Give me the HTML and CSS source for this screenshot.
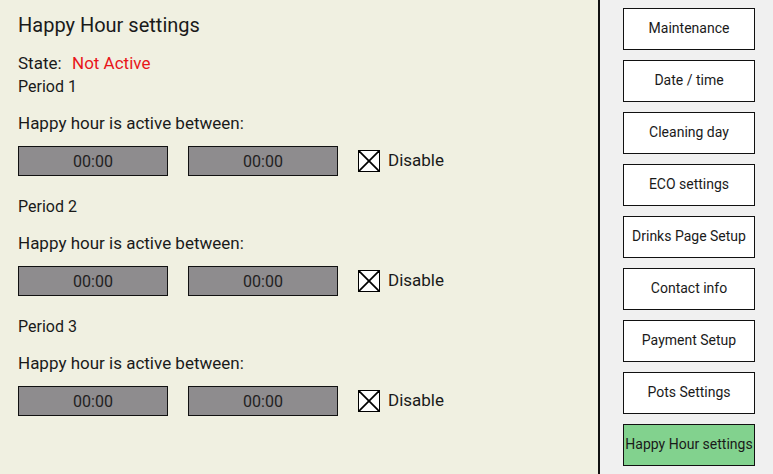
FILE: index.html
```html
<!DOCTYPE html>
<html>
<head>
<meta charset="utf-8">
<link rel="stylesheet" href="styles.css">
</head>
<body>
<div class="screen">
  <main class="content">
    <h1 class="title">Happy Hour settings</h1>
    <div class="state"><span class="label">State:</span><span class="inactive">Not Active</span></div>
    <section class="period first">
      <div class="period-name">Period 1</div>
      <div class="text">Happy hour is active between:</div>
      <div class="row">
        <div class="time">00:00</div>
        <div class="time">00:00</div>
        <div class="check"><span class="box"><svg width="22" height="22" viewBox="0 0 22 22"><line x1="1" y1="1" x2="21" y2="21" stroke="#000" stroke-width="1.8"/><line x1="21" y1="1" x2="1" y2="21" stroke="#000" stroke-width="1.8"/></svg></span><span class="check-label">Disable</span></div>
      </div>
    </section>
    <section class="period">
      <div class="period-name">Period 2</div>
      <div class="text">Happy hour is active between:</div>
      <div class="row">
        <div class="time">00:00</div>
        <div class="time">00:00</div>
        <div class="check"><span class="box"><svg width="22" height="22" viewBox="0 0 22 22"><line x1="1" y1="1" x2="21" y2="21" stroke="#000" stroke-width="1.8"/><line x1="21" y1="1" x2="1" y2="21" stroke="#000" stroke-width="1.8"/></svg></span><span class="check-label">Disable</span></div>
      </div>
    </section>
    <section class="period">
      <div class="period-name">Period 3</div>
      <div class="text">Happy hour is active between:</div>
      <div class="row">
        <div class="time">00:00</div>
        <div class="time">00:00</div>
        <div class="check"><span class="box"><svg width="22" height="22" viewBox="0 0 22 22"><line x1="1" y1="1" x2="21" y2="21" stroke="#000" stroke-width="1.8"/><line x1="21" y1="1" x2="1" y2="21" stroke="#000" stroke-width="1.8"/></svg></span><span class="check-label">Disable</span></div>
      </div>
    </section>
  </main>
  <nav class="menu">
    <div class="btn">Maintenance</div>
    <div class="btn">Date / time</div>
    <div class="btn">Cleaning day</div>
    <div class="btn">ECO settings</div>
    <div class="btn">Drinks Page Setup</div>
    <div class="btn">Contact info</div>
    <div class="btn">Payment Setup</div>
    <div class="btn">Pots Settings</div>
    <div class="btn active">Happy Hour settings</div>
  </nav>
</div>
</body>
</html>
```
FILE: styles.css
```css
* { box-sizing: border-box; }
html, body { margin: 0; padding: 0; }
body {
  font-family: Roboto, "Liberation Sans", sans-serif;
  color: #1a1a1a;
  width: 773px;
  height: 474px;
  overflow: hidden;
}
.screen {
  display: flex;
  height: 474px;
}
.content {
  width: 598px;
  background: #f0f0e1;
  padding: 10px 0 0 18px;
}
.title {
  margin: 0;
  font-size: 20px;
  font-weight: 400;
  line-height: 28px;
  height: 28px;
  padding-top: 1px;
}
.state {
  margin-top: 12px;
  font-size: 17px;
  line-height: 24px;
  height: 24px;
  padding-top: 1px;
  display: flex;
}
.label { width: 54px; }
.inactive { color: #e8161a; }
.period { margin-top: 18px; font-size: 16px; }
.period.first { margin-top: 0; }
.period-name { line-height: 24px; height: 24px; padding-top: 1px; }
.text { line-height: 24px; height: 24px; padding-top: 1px; margin-top: 12px; font-size: 17px; }
.row {
  margin-top: 12px;
  display: flex;
  align-items: center;
  gap: 20px;
}
.time {
  width: 150px;
  height: 30px;
  background: #8e8c8e;
  border: 1px solid #111;
  text-align: center;
  line-height: 28px;
  padding-top: 1px;
  font-size: 16px;
  color: #222;
}
.check {
  display: flex;
  align-items: center;
  gap: 8px;
  font-size: 17px;
}
.check-label { line-height: 24px; padding-bottom: 2px; }
.box {
  width: 22px;
  height: 22px;
  background: #fff;
  border: 1px solid #000;
  display: block;
  position: relative;
  overflow: hidden;
}
.box svg { position: absolute; left: -1px; top: -1px; }
.menu {
  width: 175px;
  border-left: 2px solid #111;
  background: #f0f0f0;
  padding: 8px 0 0 23px;
  display: flex;
  flex-direction: column;
  gap: 10px;
}
.btn {
  width: 132px;
  height: 42px;
  background: #fff;
  border: 1px solid #111;
  display: flex;
  align-items: center;
  justify-content: center;
  font-size: 14px;
  white-space: nowrap;
  color: #1a1a1a;
  padding-bottom: 2px;
}
.btn.active { background: #82d28e; }
```
